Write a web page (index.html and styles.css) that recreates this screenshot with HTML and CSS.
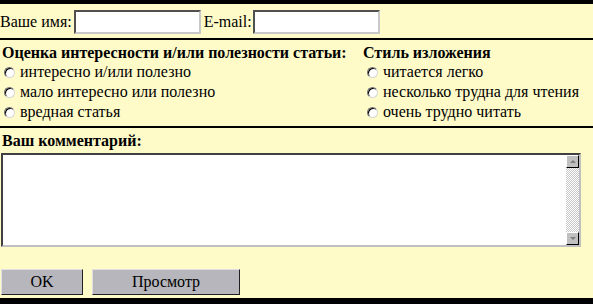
FILE: index.html
```html
<!DOCTYPE html>
<html lang="ru">
<head>
<meta charset="utf-8">
<title>Комментарий</title>
<link rel="stylesheet" href="styles.css">
</head>
<body>
<div class="bar bar-top"></div>
<form class="form">
  <div class="row-ident">
    <label class="lbl">Ваше имя:<input class="field field-name" type="text"></label>
    <label class="lbl lbl-mail">E-mail:<input class="field field-mail" type="text"></label>
  </div>
  <hr class="rule">
  <div class="ratings">
    <div class="group group-left">
      <div class="group-title">Оценка интересности и/или полезности статьи:</div>
      <label class="opt"><input class="radio" type="radio" name="r1"><span>интересно и/или полезно</span></label>
      <label class="opt"><input class="radio" type="radio" name="r1"><span>мало интересно или полезно</span></label>
      <label class="opt"><input class="radio" type="radio" name="r1"><span>вредная статья</span></label>
    </div>
    <div class="group group-right">
      <div class="group-title">Стиль изложения</div>
      <label class="opt"><input class="radio" type="radio" name="r2"><span>читается легко</span></label>
      <label class="opt"><input class="radio" type="radio" name="r2"><span>несколько трудна для чтения</span></label>
      <label class="opt"><input class="radio" type="radio" name="r2"><span>очень трудно читать</span></label>
    </div>
  </div>
  <hr class="rule">
  <div class="comment">
    <div class="group-title">Ваш комментарий:</div>
    <div class="memo">
      <textarea class="memo-text"></textarea>
      <div class="scroll">
        <div class="sbtn"><span class="arr arr-up"></span></div>
        <div class="track"></div>
        <div class="sbtn"><span class="arr arr-down"></span></div>
      </div>
    </div>
  </div>
  <div class="actions">
    <button class="btn btn-ok" type="button">OK</button>
    <button class="btn btn-preview" type="button">Просмотр</button>
  </div>
</form>
<div class="bar bar-bottom"></div>
</body>
</html>
```

FILE: styles.css
```css
html, body {
  margin: 0;
  padding: 0;
}
body {
  width: 593px;
  height: 304px;
  overflow: hidden;
  background: #fffbc9;
  font-family: "Liberation Serif", serif;
  font-size: 16px;
  color: #000;
  display: flex;
  flex-direction: column;
}
.bar { background: #000; }
.bar-top { height: 4px; }
.bar-bottom { height: 6px; margin-top: auto; }
.form {
  display: flex;
  flex-direction: column;
}
.row-ident {
  display: flex;
  align-items: center;
  gap: 3px;
  height: 33px;
  padding-top: 1px;
}
.lbl {
  display: flex;
  align-items: center;
  gap: 2px;
}
.lbl-mail { gap: 1px; }
.field {
  box-sizing: border-box;
  height: 24px;
  width: 127px;
  margin: 0;
  background: #fff;
  border: 2px solid;
  border-color: #505050 #c8c8c8 #c8c8c8 #505050;
  padding: 0 2px;
  font-family: "Liberation Serif", serif;
  font-size: 16px;
}
.rule {
  margin: 0;
  border: 0;
  height: 2px;
  background: #000;
}
.ratings {
  display: flex;
  height: 86px;
  padding-top: 4px;
  box-sizing: border-box;
}
.group {
  display: flex;
  flex-direction: column;
}
.group-left { width: 361px; padding-left: 2px; box-sizing: border-box; }
.group-right { padding-left: 2px; }
.group-title {
  font-weight: bold;
  line-height: 18px;
}
.opt {
  display: flex;
  align-items: center;
  height: 20px;
  gap: 5px;
  padding-left: 2px;
}
.group-right .opt { padding-left: 4px; }
.radio {
  appearance: none;
  -webkit-appearance: none;
  margin: 0;
  width: 11px;
  height: 11px;
  border-radius: 50%;
  background: #fff;
  border: 1px solid;
  border-color: #707070 #d8d8d8 #d8d8d8 #707070;
  box-shadow: inset 1px 1px 0 #000;
  flex: none;
}
.comment {
  padding-top: 4px;
  display: flex;
  flex-direction: column;
}
.comment .group-title { padding-left: 2px; margin-bottom: 3px; }
.memo {
  box-sizing: border-box;
  display: flex;
  width: 580px;
  height: 94px;
  margin-left: 1px;
  border: 2px solid;
  border-color: #404040 #c0c0c0 #c0c0c0 #404040;
  background: #fff;
}
.memo-text {
  flex: 1;
  border: 0;
  margin: 0;
  resize: none;
  background: #fff;
  font-family: "Liberation Serif", serif;
  font-size: 16px;
  outline: none;
}
.scroll {
  width: 13px;
  display: flex;
  flex-direction: column;
}
.track {
  flex: 1;
  background: repeating-conic-gradient(#c8c8c8 0 25%, #fff 0 50%) 0 0 / 2px 2px;
}
.sbtn {
  box-sizing: border-box;
  height: 13px;
  background: #c0c0c0;
  border: 1px solid;
  border-color: #fff #000 #000 #fff;
  display: flex;
  align-items: center;
  justify-content: center;
}
.arr {
  width: 0;
  height: 0;
  border-left: 3px solid transparent;
  border-right: 3px solid transparent;
}
.arr-up { border-bottom: 3px solid #808080; }
.arr-down { border-top: 3px solid #808080; }
.actions {
  display: flex;
  gap: 9px;
  padding-left: 1px;
  margin-top: 22px;
}
.btn {
  box-sizing: border-box;
  height: 26px;
  margin: 0;
  padding: 0;
  background: #b6b6bc;
  border: 1px solid;
  border-color: #e0e0e0 #202020 #202020 #e0e0e0;
  font-family: "Liberation Serif", serif;
  font-size: 16px;
  color: #000;
}
.btn-ok { width: 82px; }
.btn-preview { width: 148px; }
```
